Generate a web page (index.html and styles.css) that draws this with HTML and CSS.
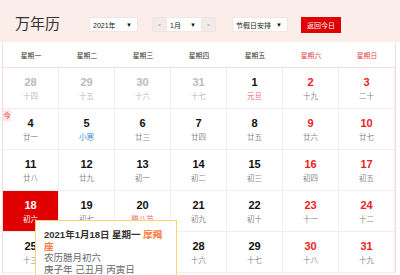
FILE: index.html
```html
<!DOCTYPE html>
<html lang="zh">
<head>
<meta charset="utf-8">
<link rel="stylesheet" href="styles.css">
</head>
<body>
<div class="header">
  <div class="title">万年历</div>
  <div class="sel sel-year"><span>2021年</span><span class="arr">▼</span></div>
  <div class="month-group">
    <div class="nav">&lt;</div>
    <div class="sel sel-month"><span>1月</span><span class="arr">▼</span></div>
    <div class="nav">&gt;</div>
  </div>
  <div class="sel sel-holiday"><span>节假日安排</span><span class="arr">▼</span></div>
  <div class="btn-today">返回今日</div>
</div>
<div class="cal">
  <div class="week">
    <div>星期一</div><div>星期二</div><div>星期三</div><div>星期四</div><div>星期五</div><div class="we">星期六</div><div class="we">星期日</div>
  </div>
  <div class="days">
    <div class="day other"><b>28</b><i>十四</i></div>
    <div class="day other"><b>29</b><i>十五</i></div>
    <div class="day other"><b>30</b><i>十六</i></div>
    <div class="day other"><b>31</b><i>十七</i></div>
    <div class="day"><b>1</b><i class="fest">元旦</i></div>
    <div class="day wk"><b>2</b><i>十九</i></div>
    <div class="day wk"><b>3</b><i>二十</i></div>

    <div class="day"><span class="badge">今</span><b>4</b><i>廿一</i></div>
    <div class="day"><b>5</b><i class="term">小寒</i></div>
    <div class="day"><b>6</b><i>廿三</i></div>
    <div class="day"><b>7</b><i>廿四</i></div>
    <div class="day"><b>8</b><i>廿五</i></div>
    <div class="day wk"><b>9</b><i>廿六</i></div>
    <div class="day wk"><b>10</b><i>廿七</i></div>

    <div class="day"><b>11</b><i>廿八</i></div>
    <div class="day"><b>12</b><i>廿九</i></div>
    <div class="day"><b>13</b><i>初一</i></div>
    <div class="day"><b>14</b><i>初二</i></div>
    <div class="day"><b>15</b><i>初三</i></div>
    <div class="day wk"><b>16</b><i>初四</i></div>
    <div class="day wk"><b>17</b><i>初五</i></div>

    <div class="day today"><b>18</b><i>初六</i></div>
    <div class="day"><b>19</b><i>初七</i></div>
    <div class="day"><b>20</b><i class="fest">腊八节</i></div>
    <div class="day"><b>21</b><i>初九</i></div>
    <div class="day"><b>22</b><i>初十</i></div>
    <div class="day wk"><b>23</b><i>十一</i></div>
    <div class="day wk"><b>24</b><i>十二</i></div>

    <div class="day"><b>25</b><i>十三</i></div>
    <div class="day"><b>26</b><i>十四</i></div>
    <div class="day"><b>27</b><i>十五</i></div>
    <div class="day"><b>28</b><i>十六</i></div>
    <div class="day"><b>29</b><i>十七</i></div>
    <div class="day wk"><b>30</b><i>十八</i></div>
    <div class="day wk"><b>31</b><i>十九</i></div>
  </div>
</div>
<div class="tip">
  <div class="tip-date"><b>2021年1月18日 星期一</b> <span class="star">摩羯座</span></div>
  <div>农历腊月初六</div>
  <div>庚子年 己丑月 丙寅日</div>
</div>
</body>
</html>
```
FILE: styles.css
```css
* { box-sizing: border-box; }
html, body { height: 275px; overflow: hidden; }
body {
  margin: 0;
  font-family: "Liberation Sans", "Noto Sans CJK SC", sans-serif;
  background: #fff;
  color: #333;
}
.header {
  height: 42px;
  background: #fbedea;
  display: flex;
  align-items: center;
  padding: 7px 0 0 15px;
}
.title {
  width: 74px;
  font-size: 15px;
  color: #333;
  margin-bottom: 4px;
}
.sel {
  height: 15px;
  background: #fff;
  border: 1px solid #f1e6e4;
  display: flex;
  align-items: center;
  justify-content: space-between;
  padding: 0 5px 0 3px;
  font-size: 7px;
  color: #222;
}
.arr { font-size: 6px; color: #111; }
.sel-year { width: 49px; }
.month-group { display: flex; margin-left: 14px; }
.nav {
  width: 15px;
  height: 15px;
  background: #f3ebea;
  border: 1px solid #efe4e2;
  color: #888;
  font-size: 6px;
  display: flex;
  align-items: center;
  justify-content: center;
}
.sel-month { width: 34px; border-left: none; border-right: none; }
.sel-holiday { width: 56px; margin-left: 16px; }
.btn-today {
  margin-left: 13px;
  width: 40px;
  height: 16px;
  background: #e00000;
  color: #fff;
  font-size: 7px;
  display: flex;
  align-items: center;
  justify-content: center;
}
.cal {
  width: 394px;
  margin-left: 2px;
  border-left: 1px solid #f6dcd8;
  border-right: 1px solid #f6dcd8;
}
.week {
  display: grid;
  grid-template-columns: repeat(7, 56px);
  height: 26px;
  border-bottom: 1px solid #f6dcd8;
  font-size: 6.8px;
  color: #333;
  text-align: center;
  align-items: center;
}
.week .we { color: #e5464a; }
.days {
  display: grid;
  grid-template-columns: repeat(7, 56px);
  grid-auto-rows: 41px;
}
.day {
  position: relative;
  border-right: 1px solid #eee;
  border-bottom: 1px solid #eee;
  padding-top: 7px;
  text-align: center;
}
.day b {
  display: block;
  font-size: 11px;
  line-height: 15px;
  font-weight: bold;
  color: #111;
}
.day i {
  display: block;
  font-style: normal;
  font-size: 7.5px;
  line-height: 13px;
  color: #888;
}
.day.wk b { color: #ee1c24; }
.day.other b, .day.other i { color: #bbb; }
.day i.fest { color: #e9686b; }
.day i.term { color: #3d8fd9; }
.day.today { background: #e00000; }
.day.today b, .day.today i { color: #fff; }
.badge {
  position: absolute;
  left: 0;
  top: 1px;
  width: 8px;
  height: 11px;
  background: #fde3e3;
  color: #f04040;
  font-size: 7px;
  line-height: 11px;
  text-align: center;
}
.tip {
  position: absolute;
  left: 35px;
  top: 220px;
  width: 142px;
  height: 56px;
  background: #fff;
  border: 1px solid #ffd36e;
  padding: 8px 7px 0 8px;
  font-size: 9.5px;
  line-height: 11.5px;
  color: #666;
}
.tip-date b { color: #333; }
.star { color: #ff7a3a; font-weight: bold; }
```
